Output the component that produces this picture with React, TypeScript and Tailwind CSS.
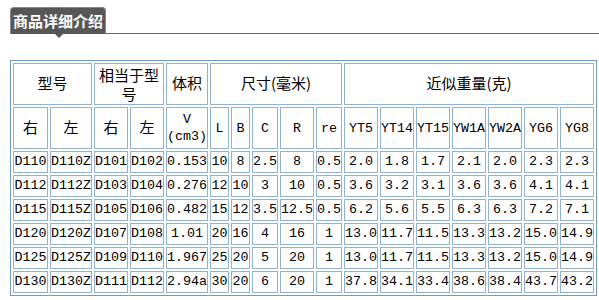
import React from "react";

const cjk = "font-['Noto_Sans_CJK_SC',sans-serif] text-[15px] leading-[19px]";
const cell = "border border-[#8db3d5] p-0 text-center align-middle font-normal";

const widths = [35, 42, 34, 34, 42, 19, 19, 24, 34, 25, 34, 34, 34, 34, 34, 32, 33];

const subHeads: { label: string; cn?: boolean }[] = [
  { label: "右", cn: true },
  { label: "左", cn: true },
  { label: "右", cn: true },
  { label: "左", cn: true },
  { label: "V (cm3)" },
  { label: "L" },
  { label: "B" },
  { label: "C" },
  { label: "R" },
  { label: "re" },
  { label: "YT5" },
  { label: "YT14" },
  { label: "YT15" },
  { label: "YW1A" },
  { label: "YW2A" },
  { label: "YG6" },
  { label: "YG8" },
];

const rows = [
  ["D110", "D110Z", "D101", "D102", "0.153", "10", "8", "2.5", "8", "0.5", "2.0", "1.8", "1.7", "2.1", "2.0", "2.3", "2.3"],
  ["D112", "D112Z", "D103", "D104", "0.276", "12", "10", "3", "10", "0.5", "3.6", "3.2", "3.1", "3.6", "3.6", "4.1", "4.1"],
  ["D115", "D115Z", "D105", "D106", "0.482", "15", "12", "3.5", "12.5", "0.5", "6.2", "5.6", "5.5", "6.3", "6.3", "7.2", "7.1"],
  ["D120", "D120Z", "D107", "D108", "1.01", "20", "16", "4", "16", "1", "13.0", "11.7", "11.5", "13.3", "13.2", "15.0", "14.9"],
  ["D125", "D125Z", "D109", "D110", "1.967", "25", "20", "5", "20", "1", "13.0", "11.7", "11.5", "13.3", "13.2", "15.0", "14.9"],
  ["D130", "D130Z", "D111", "D112", "2.94a", "30", "20", "6", "20", "1", "37.8", "34.1", "33.4", "38.6", "38.4", "43.7", "43.2"],
];

export default function App() {
  return (
    <div className="h-[300px] w-[599px] overflow-hidden bg-white pt-[7px] font-['Liberation_Mono',monospace] text-[13.33px] text-black">
      {/* section tab */}
      <div className="flex items-end pl-[10px]">
        <div className="relative flex h-[27px] w-[96px] items-center rounded-t-[4px] border border-b-0 border-[#888] bg-[#575757] pl-[2px]">
          <span className="font-['Noto_Sans_CJK_SC',sans-serif] text-[15px] font-bold text-white">商品详细介绍</span>
          <div className="absolute top-full left-[44px] h-0 w-0 border-x-[4px] border-t-[4px] border-x-transparent border-t-[#575757]" />
        </div>
        <div className="h-px flex-1 bg-[#666]" />
      </div>

      {/* detail table */}
      <table className="mt-[26px] ml-[10px] border-separate border-spacing-[2px] border border-[#6e9cc6]">
        <colgroup>
          {widths.map((w, i) => (
            <col key={i} style={{ width: w }} />
          ))}
        </colgroup>
        <thead>
          <tr className="h-[42px]">
            <th colSpan={2} className={cell}>
              <span className={cjk}>型号</span>
            </th>
            <th colSpan={2} className={cell}>
              <div className={`${cjk} px-[2px] leading-[17px]`}>相当于型号</div>
            </th>
            <th className={cell}>
              <span className={cjk}>体积</span>
            </th>
            <th colSpan={5} className={cell}>
              <span className={cjk}>尺寸(毫米)</span>
            </th>
            <th colSpan={7} className={cell}>
              <span className={cjk}>近似重量(克)</span>
            </th>
          </tr>
          <tr className="h-[42px]">
            {subHeads.map((h, i) =>
              h.cn ? (
                <th key={i} className={cell} style={{ width: widths[i] }}>
                  <span className={cjk}>{h.label}</span>
                </th>
              ) : (
                <th key={i} className={`${cell} leading-[17px]`} style={{ width: widths[i] }}>
                  {h.label === "V (cm3)" ? (
                    <>
                      V
                      <br />
                      (cm3)
                    </>
                  ) : (
                    h.label
                  )}
                </th>
              )
            )}
          </tr>
        </thead>
        <tbody>
          {rows.map((r, ri) => (
            <tr key={ri} className="h-[22px]">
              {r.map((v, ci) => (
                <td key={ci} className={`${cell} whitespace-nowrap leading-[18px]`}>
                  {v}
                </td>
              ))}
            </tr>
          ))}
        </tbody>
      </table>
    </div>
  );
}
